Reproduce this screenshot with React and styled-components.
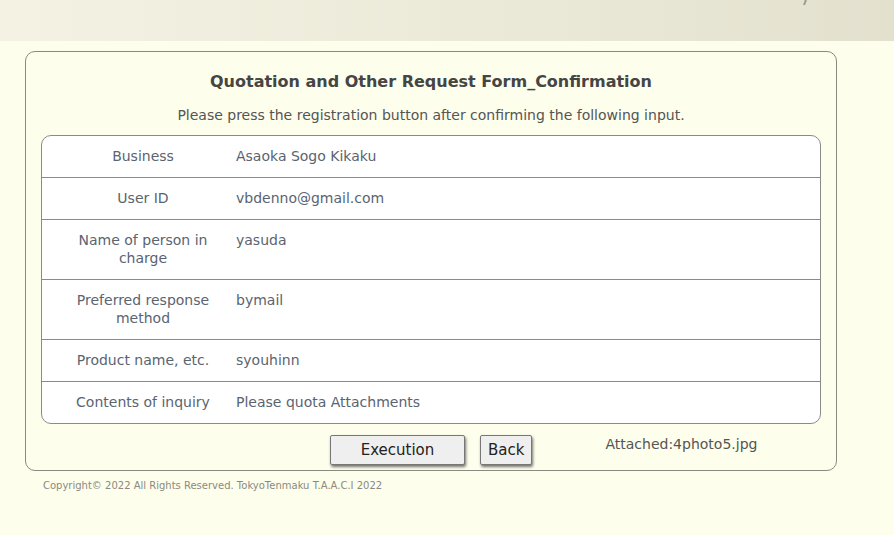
import React from "react";
import styled, { createGlobalStyle } from "styled-components";

const GlobalStyle = createGlobalStyle`
  html, body {
    margin: 0;
    padding: 0;
    background: #fefeec;
  }
  body {
    font-family: "DejaVu Sans", Verdana, sans-serif;
  }
`;

const Header = styled.header`
  height: 41px;
  background: linear-gradient(to right, #f4f2e3, #e3e1ce);
  display: flex;
  justify-content: flex-end;
  padding-right: 86px;
  overflow: hidden;
`;

const Panel = styled.section`
  margin: 10px 0 0 25px;
  border: 1px solid #8a8a80;
  border-radius: 10px;
  padding: 0 15px 5px 15px;
  width: 780px;
`;

const Title = styled.h1`
  margin: 0;
  padding-top: 19px;
  text-align: center;
  font-size: 16px;
  line-height: 22px;
  font-weight: bold;
  color: #454545;
`;

const Lead = styled.p`
  margin: 13px 0 11px;
  text-align: center;
  font-size: 14px;
  line-height: 18px;
  color: #555;
`;

const Table = styled.div`
  background: #fff;
  border: 1px solid #8a8a8a;
  border-radius: 10px;
  overflow: hidden;
`;

const Row = styled.div`
  display: grid;
  grid-template-columns: 186px 1fr;
  border-top: ${(p) => (p.$first ? "none" : "1px solid #8a8a8a")};
  font-size: 14px;
  line-height: 18px;
  color: #5a6470;
`;

const Label = styled.div`
  padding: 11px 10px 12px 26px;
  text-align: center;
`;

const Value = styled.div`
  padding: 11px 8px 12px;
`;

const Actions = styled.div`
  display: flex;
  align-items: flex-start;
  padding: 11px 0 0 289px;
`;

const Button = styled.button`
  height: 30px;
  padding: 0 ${(p) => p.$pad || 7}px;
  min-width: ${(p) => p.$w || 0}px;
  margin-right: 15px;
  font-family: "DejaVu Sans", Verdana, sans-serif;
  font-size: 15px;
  color: #222;
  background: #efefef;
  border: 1px solid #777;
  border-radius: 2px;
  box-shadow: 1px 2px 3px rgba(0, 0, 0, 0.55);
`;

const Attached = styled.span`
  margin: 1px 0 0 58px;
  font-size: 14px;
  line-height: 16px;
  color: #555;
`;

const Copyright = styled.footer`
  margin: 9px 0 0 43px;
  font-size: 10px;
  color: #8a8a80;
`;

const rows = [
  ["Business", "Asaoka Sogo Kikaku"],
  ["User ID", "vbdenno@gmail.com"],
  ["Name of person in charge", "yasuda"],
  ["Preferred response method", "bymail"],
  ["Product name, etc.", "syouhinn"],
  ["Contents of inquiry", "Please quota Attachments"],
];

export default function App() {
  return (
    <>
      <GlobalStyle />
      <Header>
        <svg width="8" height="6" viewBox="0 0 8 6">
          <path d="M6 0 L4 5" stroke="#9a9a90" strokeWidth="2" />
        </svg>
      </Header>
      <Panel>
        <Title>Quotation and Other Request Form_Confirmation</Title>
        <Lead>
          Please press the registration button after confirming the following input.
        </Lead>
        <Table>
          {rows.map(([k, v], i) => (
            <Row key={k} $first={i === 0}>
              <Label>{k}</Label>
              <Value>{v}</Value>
            </Row>
          ))}
        </Table>
        <Actions>
          <Button $w={135}>Execution</Button>
          <Button>Back</Button>
          <Attached>Attached:4photo5.jpg</Attached>
        </Actions>
      </Panel>
      <Copyright>Copyright© 2022 All Rights Reserved. TokyoTenmaku T.A.A.C.I 2022</Copyright>
    </>
  );
}
